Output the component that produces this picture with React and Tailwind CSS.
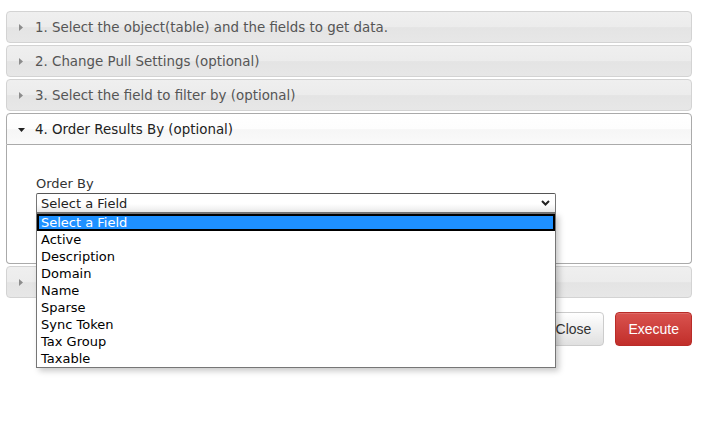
import React from 'react';

const FIELDS = ['Select a Field', 'Active', 'Description', 'Domain', 'Name', 'Sparse', 'Sync Token', 'Tax Group', 'Taxable'];

const glass = 'bg-[linear-gradient(to_bottom,#efefef_0%,#ececec_50%,#e4e4e4_52%,#e7e7e7_100%)]';

function TriRight() {
  return (
    <svg width="4" height="7" viewBox="0 0 4 7">
      <path d="M0 0 L4 3.5 L0 7 Z" fill="#8c8c8c" />
    </svg>
  );
}

function TriDown() {
  return (
    <svg width="7" height="4" viewBox="0 0 7 4">
      <path d="M0 0 L7 0 L3.5 4 Z" fill="#222" />
    </svg>
  );
}

function Header({ children, active = false, first = false }) {
  return (
    <div
      className={`flex h-[32px] pl-[6px] pt-[8px] border ${first ? '' : 'mt-[2px]'} ${
        active
          ? 'border-[#aaa] rounded-t-[4px] text-[#222] bg-[linear-gradient(to_bottom,#ffffff_0%,#fdfdfd_50%,#f6f6f6_52%,#fafafa_100%)]'
          : `border-[#d3d3d3] rounded-[4px] text-[#555] ${glass}`
      }`}
    >
      <span className="w-[16px] h-[15px] flex items-center justify-center shrink-0">
        {active ? <TriDown /> : <TriRight />}
      </span>
      <span className="ml-[6px] leading-[15px] text-[13.4px] whitespace-nowrap">{children}</span>
    </div>
  );
}

export default function App() {
  return (
    <div className="bg-white min-h-[428px] pt-[11px] pl-[6px] pr-[9px] font-['DejaVu_Sans',Verdana,sans-serif] text-[13px]">
      <Header first>1. Select the object(table) and the fields to get data.</Header>
      <Header>2. Change Pull Settings (optional)</Header>
      <Header>3. Select the field to filter by (optional)</Header>
      <Header active>4. Order Results By (optional)</Header>
      <div className="h-[119px] border-x border-b border-[#aaa] rounded-b-[4px] pt-[31px] pl-[29px]">
        <div className="leading-[15px] text-[#333]">Order By</div>
        <div className="relative w-[520px] mt-[2px]">
          <div className="h-[20px] flex items-center justify-between pl-[4px] pr-[5px] border border-[#767676] border-t-[#555] rounded-t-[2px] bg-[linear-gradient(to_bottom,#ffffff_0%,#ffffff_55%,#ebebeb_100%)] text-[#222] leading-[15px]">
            <span>Select a Field</span>
            <svg width="9" height="6" viewBox="0 0 9 6">
              <path d="M1 1 L4.5 4.5 L8 1" fill="none" stroke="#222" strokeWidth="2" />
            </svg>
          </div>
          <div className="absolute left-0 top-full w-[520px] z-10 bg-white border border-[#767676] shadow-[3px_3px_6px_rgba(0,0,0,0.22)]">
            {FIELDS.map((f, i) => (
              <div
                key={f}
                className={`h-[17px] leading-[17px] pl-[4px] ${
                  i === 0 ? 'bg-[#1e90ff] text-white shadow-[inset_0_0_0_2px_#000]' : 'text-black'
                }`}
              >
                {f}
              </div>
            ))}
          </div>
        </div>
      </div>
      <Header />
      <div className="flex justify-end gap-[11px] mt-[14px] font-['Liberation_Sans',Arial,sans-serif] text-[14px]">
        <button className="h-[34px] px-[12px] rounded-[4px] border border-[#ccc] text-[#333] bg-[linear-gradient(to_bottom,#ffffff_0%,#e0e0e0_100%)] shadow-[inset_0_1px_0_rgba(255,255,255,0.15)]">
          Close
        </button>
        <button className="h-[34px] px-[12px] rounded-[4px] border border-[#b92c28] text-white bg-[linear-gradient(to_bottom,#d9534f_0%,#c12e2a_100%)] shadow-[inset_0_1px_0_rgba(255,255,255,0.15)]">
          Execute
        </button>
      </div>
    </div>
  );
}
